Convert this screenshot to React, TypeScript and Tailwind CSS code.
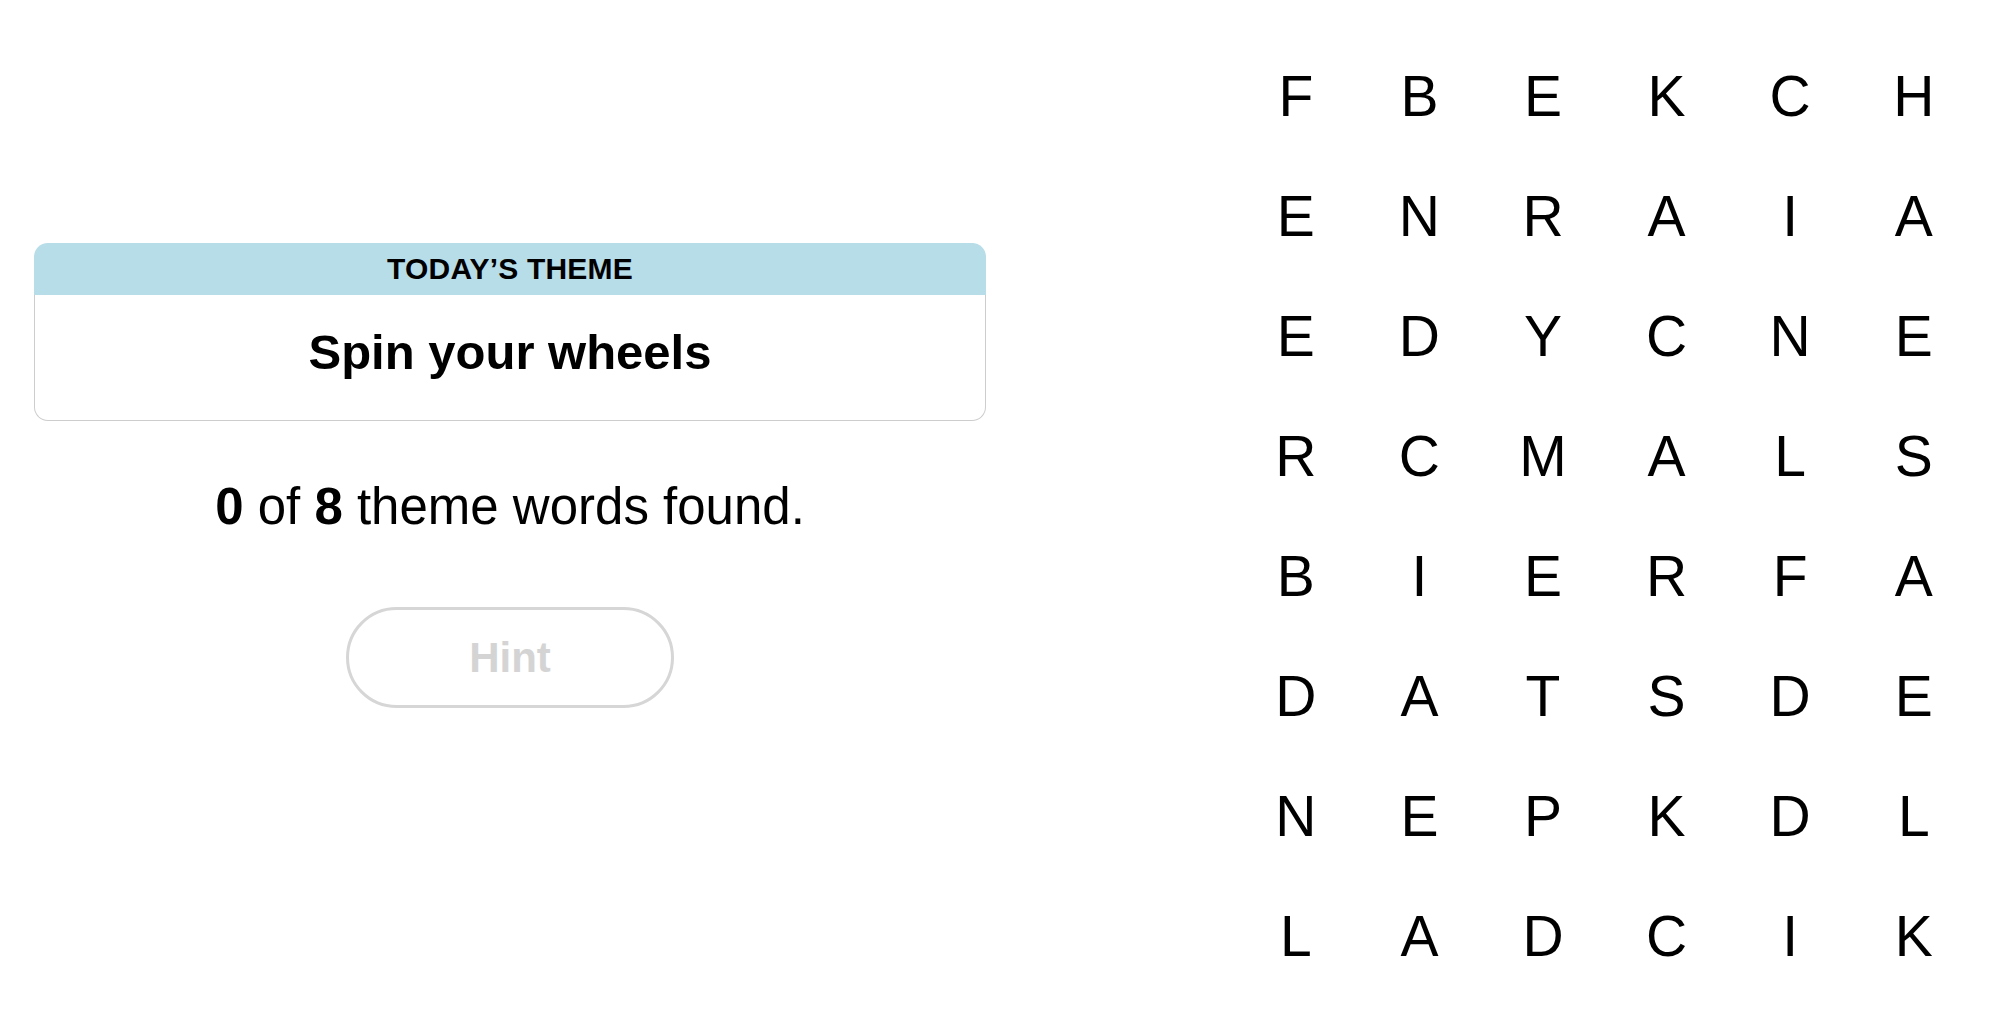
const board: string[] = [
  "FBEKCH",
  "ENRAIA",
  "EDYCNE",
  "RCMALS",
  "BIERFA",
  "DATSDE",
  "NEPKDL",
  "LADCIK",
];

const ThemeCard = () => {
  return (
    <div className="w-full">
      <div className="flex h-[52px] items-center justify-center rounded-t-[14px] bg-[#b7dde9]">
        <span className="text-[30px] font-bold leading-none tracking-[0.2px] text-black">TODAY’S THEME</span>
      </div>
      <div className="h-[126px] rounded-b-[14px] border border-t-0 border-[#cdcdcd] pt-[33px] text-center">
        <span className="text-[49px] font-bold leading-none text-black">Spin your wheels</span>
      </div>
    </div>
  );
};

const LetterGrid = () => {
  return (
    <div className="grid grid-cols-[repeat(6,123.6px)]">
      {board.map((row, r) =>
        row.split("").map((ch, c) => (
          <div key={`${r}-${c}`} className="flex h-[120px] items-center justify-center">
            <span className="text-[57px] font-normal leading-none text-black">{ch}</span>
          </div>
        ))
      )}
    </div>
  );
};

export default function App() {
  return (
    <div
      className="flex h-[1016px] w-[2000px] overflow-hidden bg-white"
      style={{ fontFamily: '"Liberation Sans", Arial, sans-serif' }}
    >
      <div className="ml-[34px] flex w-[952px] flex-col items-center pt-[243px]">
        <ThemeCard />
        <p className="mt-[60px] text-[51px] leading-none text-black">
          <span className="font-bold">0</span> of <span className="font-bold">8</span> theme words found.
        </p>
        <button
          disabled
          className="mt-[75px] flex h-[101px] w-[328px] items-center justify-center rounded-full border-[3px] border-[#d6d6d6] bg-white"
        >
          <span className="text-[42px] font-bold leading-none text-[#d4d4d4]">Hint</span>
        </button>
      </div>
      <div className="ml-[248px] pt-[36px]">
        <LetterGrid />
      </div>
    </div>
  );
}
